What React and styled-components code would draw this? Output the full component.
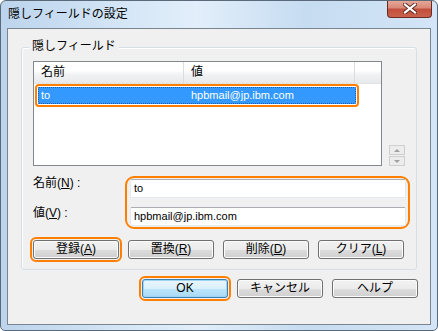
import React from "react"
import styled, { createGlobalStyle } from "styled-components"

const GlobalStyle = createGlobalStyle`
  html, body { margin: 0; padding: 0; }
  body {
    font-family: "Liberation Sans", "Noto Sans CJK JP", sans-serif;
    font-size: 12px;
    color: #000;
    background: #fff;
  }
`

// ventana
const Window = styled.div`
  box-sizing: border-box;
  width: 438px;
  height: 331px;
  border: 1px solid #5a6a7a;
  border-radius: 6px 6px 5px 5px;
  background: linear-gradient(90deg, #bcd4ec 0%, #d6e7f7 30%, #e2eefa 45%, #c6dcf1 70%, #d3e5f6 100%);
  display: flex;
  flex-direction: column;
  overflow: hidden;
`
const TitleBar = styled.div`
  height: 27px;
  display: flex;
  align-items: flex-start;
  justify-content: space-between;
  padding-left: 7px;
`
const Title = styled.span`
  line-height: 27px;
  font-size: 12px;
`
const CloseButton = styled.div`
  width: 43px;
  height: 17px;
  margin-right: 5px;
  margin-top: -1px;
  border: 1px solid #6b2a22;
  border-top: none;
  border-radius: 0 0 4px 4px;
  background: linear-gradient(#e8ab9c 0%, #d98a78 45%, #c24f3c 55%, #c9624c 100%);
  display: flex;
  align-items: center;
  justify-content: center;
`
const Client = styled.div`
  box-sizing: border-box;
  margin: 0 6px;
  height: 297px;
  border: 1px solid #7a8590;
  background: #f0f0f0;
  display: flex;
  flex-direction: column;
`

// grupo
const Group = styled.div`
  margin: 18px 13px 0 13px;
  border: 1px solid #d5dfe5;
  border-radius: 3px;
  padding: 0 6px 10px 11px;
  box-shadow: inset 1px 1px 0 #fff;
`
const GroupTitle = styled.div`
  display: table;
  margin: -11px 0 0 -4px;
  padding: 0 3px;
  line-height: 18px;
  background: #f0f0f0;
`
const ListRow = styled.div`
  margin-top: 6px;
  display: flex;
  align-items: flex-end;
  gap: 7px;
`
const List = styled.div`
  box-sizing: border-box;
  width: 349px;
  height: 105px;
  border: 1px solid #828790;
  background: #fff;
`
const Header = styled.div`
  display: grid;
  grid-template-columns: 150px 171px 1fr;
  height: 21px;
  background: linear-gradient(#ffffff 0%, #ffffff 40%, #f1f2f4 60%, #e8e9eb 100%);
  border-bottom: 1px solid #e2e3e5;
`
const HeaderCell = styled.div`
  padding-left: 7px;
  line-height: 21px;
  border-right: ${p => (p.$last ? "none" : "1px solid #dcdcdc")};
`
const Item = styled.div`
  box-sizing: border-box;
  display: grid;
  grid-template-columns: 150px 1fr;
  margin: 3px 25px 0 4px;
  height: 17px;
  background: #3399ff;
  color: #fff;
  font-size: 11px;
  border: 1px dotted #1d5fae;
  outline: 2px solid #ff8000;
  outline-offset: 1px;
  border-radius: 1px;
`
const ItemCell = styled.span`
  padding-left: 2px;
  line-height: 15px;
`
const Spinner = styled.div`
  display: flex;
  flex-direction: column;
  gap: 1px;
`
const SpinBox = styled.div`
  width: 14px;
  height: 8px;
  border: 1px solid #cfcfcf;
  background: #ececec;
  display: flex;
  align-items: center;
  justify-content: center;
`
const Fields = styled.div`
  margin-top: 10px;
  display: flex;
`
const Labels = styled.div`
  width: 92px;
  display: flex;
  flex-direction: column;
  gap: 16px;
`
const Label = styled.span`
  line-height: 14px;
`
const Highlight = styled.div`
  flex: 0 0 285px;
  box-sizing: border-box;
  border: 2px solid #ff8000;
  border-radius: 9px;
  padding: 1px 2px 1px 3px;
  display: flex;
  flex-direction: column;
  gap: 9px;
`
const Input = styled.div`
  box-sizing: border-box;
  height: 19px;
  border: 1px solid #e3e9ef;
  border-top-color: #abadb3;
  border-radius: 2px;
  background: #fff;
  padding-left: 3px;
  font-size: 11px;
  line-height: 17px;
`
const ButtonRow = styled.div`
  margin-top: 11px;
  display: flex;
  justify-content: space-between;
  width: 371px;
`
const Button = styled.div`
  box-sizing: border-box;
  width: 86px;
  height: 19px;
  border: 1px solid ${p => (p.$primary ? "#3c7fb1" : "#707070")};
  border-radius: 3px;
  background: ${p =>
    p.$primary
      ? "linear-gradient(#eaf6fd 0%, #d9f0fc 50%, #bee6fd 51%, #a7d9f5 100%)"
      : "linear-gradient(#f2f2f2 0%, #ebebeb 50%, #dddddd 51%, #cfcfcf 100%)"};
  box-shadow: inset 0 0 0 1px ${p => (p.$primary ? "#9fd5f3" : "#fcfcfc")};
  text-align: center;
  line-height: 17px;
  outline: ${p => (p.$mark ? "2px solid #ff8000" : "none")};
  outline-offset: 1px;
`
const Footer = styled.div`
  margin: 9px 12px 0 0;
  display: flex;
  justify-content: flex-end;
  gap: 9px;
`

export default function App() {
  return (
    <>
      <GlobalStyle />
      <Window>
        <TitleBar>
          <Title>隠しフィールドの設定</Title>
          <CloseButton>
            <svg width="14" height="11" viewBox="0 0 14 11">
              <path d="M2 1.5 L12 9.5 M12 1.5 L2 9.5" stroke="#5a2a22" strokeWidth="4" strokeLinecap="square" />
              <path d="M2 1.5 L12 9.5 M12 1.5 L2 9.5" stroke="#fff" strokeWidth="2.2" strokeLinecap="square" />
            </svg>
          </CloseButton>
        </TitleBar>
        <Client>
          <Group>
            <GroupTitle>隠しフィールド</GroupTitle>
            <ListRow>
              <List>
                <Header>
                  <HeaderCell>名前</HeaderCell>
                  <HeaderCell>値</HeaderCell>
                  <HeaderCell $last />
                </Header>
                <Item>
                  <ItemCell>to</ItemCell>
                  <ItemCell>hpbmail@jp.ibm.com</ItemCell>
                </Item>
              </List>
              <Spinner>
                <SpinBox>
                  <svg width="6" height="3"><path d="M3 0 L6 3 L0 3 Z" fill="#a0a0a0" /></svg>
                </SpinBox>
                <SpinBox>
                  <svg width="6" height="3"><path d="M0 0 L6 0 L3 3 Z" fill="#a0a0a0" /></svg>
                </SpinBox>
              </Spinner>
            </ListRow>
            <Fields>
              <Labels>
                <Label>名前(<u>N</u>) :</Label>
                <Label>値(<u>V</u>) :</Label>
              </Labels>
              <Highlight>
                <Input>to</Input>
                <Input>hpbmail@jp.ibm.com</Input>
              </Highlight>
            </Fields>
            <ButtonRow>
              <Button $mark>登録(<u>A</u>)</Button>
              <Button>置換(<u>R</u>)</Button>
              <Button>削除(<u>D</u>)</Button>
              <Button>クリア(<u>L</u>)</Button>
            </ButtonRow>
          </Group>
          <Footer>
            <Button $primary $mark>OK</Button>
            <Button>キャンセル</Button>
            <Button>ヘルプ</Button>
          </Footer>
        </Client>
      </Window>
    </>
  )
}
